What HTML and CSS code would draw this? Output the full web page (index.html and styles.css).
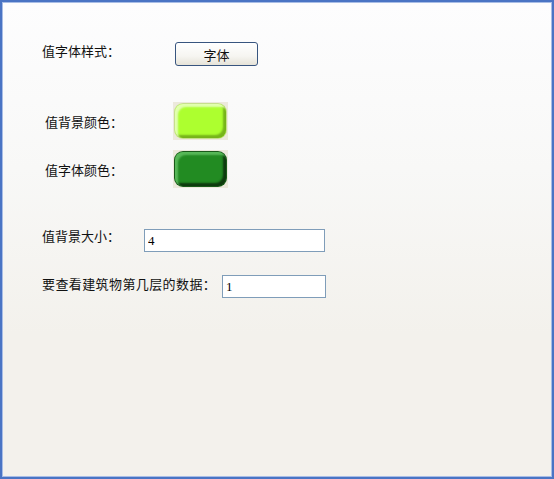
FILE: index.html
```html
<!DOCTYPE html>
<html lang="zh">
<head>
<meta charset="utf-8">
<title>设置</title>
<link rel="stylesheet" href="styles.css">
</head>
<body>
<div class="window">
  <div class="row row-font">
    <span class="label">值字体样式：</span>
    <button class="btn" type="button">字体</button>
  </div>
  <div class="row row-bg">
    <span class="label">值背景颜色：</span>
    <div class="swatch"><div class="chip chip-light"></div></div>
  </div>
  <div class="row row-fg">
    <span class="label">值字体颜色：</span>
    <div class="swatch"><div class="chip chip-dark"></div></div>
  </div>
  <div class="row row-size">
    <span class="label">值背景大小：</span>
    <input class="field field-wide" type="text" value="4">
  </div>
  <div class="row row-floor">
    <span class="label label-long">要查看建筑物第几层的数据：</span>
    <input class="field field-narrow" type="text" value="1">
  </div>
</div>
</body>
</html>
```
FILE: styles.css
```css
html, body {
  margin: 0;
  padding: 0;
}
body {
  width: 554px;
  height: 479px;
  overflow: hidden;
  font-family: "Noto Sans CJK SC", "Noto Sans", sans-serif;
  font-size: 13px;
  color: #111;
}
.window {
  box-sizing: border-box;
  width: 554px;
  height: 479px;
  border: 2px solid #4a74c4;
  box-shadow: inset 0 0 0 1px #a8bde6;
  background: linear-gradient(#fdfdfe 0%, #f8f8f7 35%, #f3f1ec 70%, #f3f1ec 100%);
  padding: 40px 0 0 40px;
  display: flex;
  flex-direction: column;
}
.row {
  display: flex;
  align-items: center;
}
.label {
  display: block;
  line-height: 15px;
  white-space: nowrap;
  position: relative;
  top: -4px;
}
.label-long { letter-spacing: 0.4px; }
.row-font .label { width: 133px; }
.row-bg, .row-fg { padding-left: 3px; }
.row-bg .label, .row-fg .label { width: 128px; top: 0; }
.row-bg { margin-top: 36px; }
.row-fg { margin-top: 10px; }
.row-size { margin-top: 41px; }
.row-size .label { width: 102px; top: -5px; }
.row-floor { margin-top: 23px; }
.row-floor .label { width: 180px; top: -3px; }

.btn {
  box-sizing: border-box;
  width: 83px;
  height: 24px;
  border: 1px solid #38557f;
  border-radius: 3px;
  background: linear-gradient(#ffffff 0%, #f6f5f1 60%, #e6e3d8 100%);
  font-family: "Noto Sans CJK SC", "Noto Sans", sans-serif;
  font-size: 13px;
  color: #111;
  padding: 0;
  margin: 0;
}

.swatch {
  width: 55px;
  height: 38px;
  background: #ece9dc;
  padding: 2px;
  box-sizing: border-box;
}
.chip {
  width: 100%;
  height: 100%;
  border-radius: 8px;
  box-sizing: border-box;
}
.chip-light {
  background: #adff2f;
  box-shadow: inset 3px 3px 2px #e2ffb0, inset -3px -3px 2px #76b41a, 0 0 0 1px #c6e08c;
}
.chip-dark {
  background: #228b22;
  box-shadow: inset 3px 3px 2px #58b858, inset -3px -3px 2px #0e3a0e, 0 0 0 1px #1a5a1a;
}

.field {
  box-sizing: border-box;
  height: 23px;
  border: 1px solid #7f9db9;
  background: #fff;
  margin: 0;
  padding: 0 3px;
  font-family: "Liberation Serif", serif;
  font-size: 13px;
  color: #000;
  outline: none;
}
.field-wide { width: 181px; }
.field-narrow { width: 104px; }
```
